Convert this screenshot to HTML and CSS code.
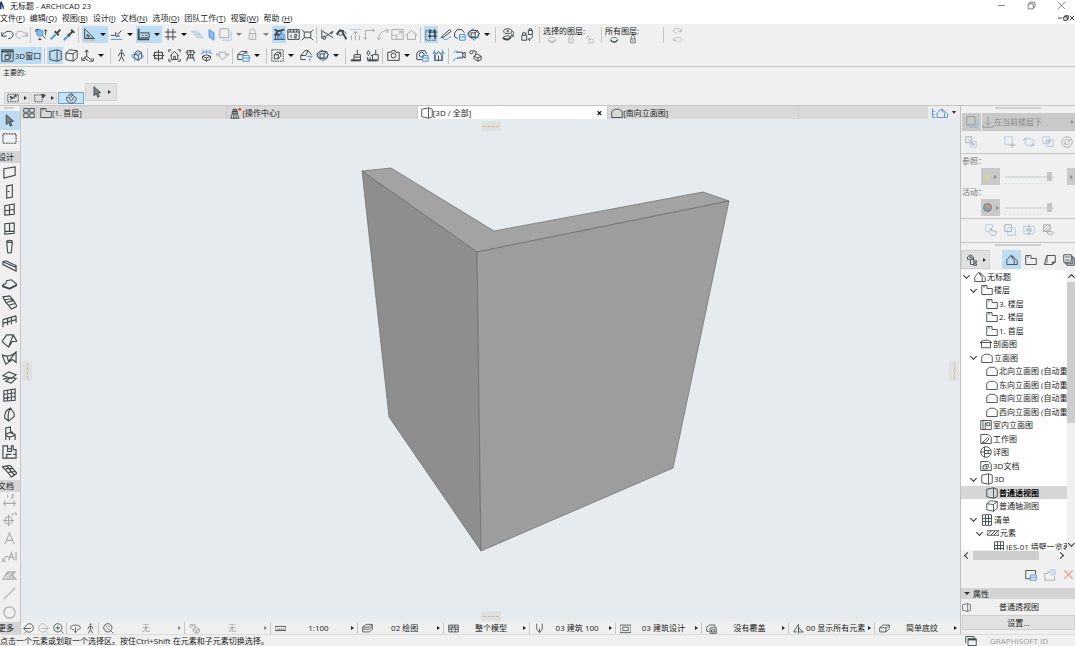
FILE: index.html
```html
<!DOCTYPE html>
<html lang="zh-CN">
<head>
  <meta charset="UTF-8">
  <meta name="viewport" content="width=device-width, initial-scale=1.0">
  <title>无标题 - ARCHICAD 23</title>
  <link rel="stylesheet" href="styles.css">
</head>
<body>
  <svg class="sprite" aria-hidden="true">
    <!-- editing -->
    <symbol id="undo" viewBox="0 0 16 16"><path d="M1 5v5h6M1 10c3-7 13-8 14-2 0 3-3 5-6 5"/></symbol>
    <symbol id="redo" viewBox="0 0 16 16"><path d="M15 5v5H9M15 10C12 3 2 2 1 8c0 3 3 5 6 5"/></symbol>
    <symbol id="find" viewBox="0 0 16 16"><circle cx="6" cy="6" r="4" class="blue-fill"/><path d="M9 9l4 4M1 2h4M1 2v3M13 2v7M11 4l2-2 2 2M6 12v3M4 14h4"/></symbol>
    <symbol id="pick" viewBox="0 0 16 16"><path class="blue thick" d="M2 14l6-6"/><path class="thick" d="M7 4l5 5M9 7l5-5"/></symbol>
    <symbol id="inject" viewBox="0 0 16 16"><path class="blue thick" d="M1 15l5-5"/><path class="thick" d="M6 10l6-6M10 2l4 4"/><path d="M5 7l4 4"/></symbol>
    <symbol id="setsquare" viewBox="0 0 16 16"><path d="M2 1v12h12zM5 8v2h3z"/><path d="M4 13v-2M7 13v-2M10 13v-2"/><path class="orange" d="M1 15h14"/></symbol>
    <symbol id="snapguide" viewBox="0 0 16 16"><path class="blue" d="M1 14h14"/><path d="M1 9h5M9 9l5-6M7 5v5h5"/></symbol>
    <symbol id="coords" viewBox="0 0 16 16"><path class="thick" d="M2 1v13h13"/><path d="M4 6h11v6H4M6 9h2M10 9h3"/></symbol>
    <symbol id="hash" viewBox="0 0 16 16"><path d="M5 1v14M11 1v14M1 5h14M1 11h14"/></symbol>
    <symbol id="plane" viewBox="0 0 16 16"><path class="blue" d="M1 4h7l7 8H8zM3 6h7M5 8h7M6 10h7"/></symbol>
    <symbol id="vplane" viewBox="0 0 16 16"><path class="blue-fill" d="M5 2l6 4v9l-6-4z"/></symbol>
    <symbol id="frame" viewBox="0 0 16 16"><path d="M1 1h11v11H1z"/><path class="blue" d="M4 15h11V4"/></symbol>
    <symbol id="lock" viewBox="0 0 16 16"><path d="M4 7h8v7H4zM5 7V4c0-4 6-4 6 0v3M8 9v3"/></symbol>
    <symbol id="gravity" viewBox="0 0 16 16"><path class="thick" d="M2 2l4 2 8-2M6 4L3 8h7"/><path d="M1 14h14M3 8v6M6 8v6M10 3v5"/><circle cx="11" cy="10" r="3" class="blue-fill"/></symbol>
    <symbol id="ruler" viewBox="0 0 16 16"><path d="M1 2h14v12H1zM1 5h14M4 2v3M8 2v3M12 2v3M5 8v4M9 8h3v2H9v2h3"/></symbol>
    <symbol id="stretch" viewBox="0 0 16 16"><path d="M4 5h8v7H4zM1 2l3 3M15 2l-3 3M1 15l3-3M15 15l-3-3"/></symbol>
    <symbol id="trim" viewBox="0 0 16 16"><path d="M1 2v11M2 4l13 8M3 12l12-8"/><circle cx="4" cy="12" r="2"/><circle cx="13" cy="6" r="1"/></symbol>
    <symbol id="hammer" viewBox="0 0 16 16"><path class="thick" d="M2 8l4-5 5 1M9 5l5 9"/><path d="M3 8l4 1 4-2M11 4l3 3"/></symbol>
    <symbol id="elevate" viewBox="0 0 16 16"><path class="blue" d="M1 2h14"/><path d="M8 15V4M5 7l3-3 3 3M3 9v6M13 9v6"/></symbol>
    <symbol id="place" viewBox="0 0 16 16"><path d="M8 1v11M4 8l4 4 4-4M1 15h14M1 12v3M15 12v3"/></symbol>
    <symbol id="corner" viewBox="0 0 16 16"><path d="M3 14V3h11M1 12l2 2 2-2M12 1l2 2-2 2"/></symbol>
    <symbol id="fillet" viewBox="0 0 16 16"><path d="M2 14C2 8 5 3 14 3M11 1l3 2-2 3M1 11l1 3 3-2"/></symbol>
    <symbol id="resize" viewBox="0 0 16 16"><path d="M1 2h14v12H1zM1 9h6v5M8 8l5-4M10 4h3v3"/></symbol>
    <symbol id="home" viewBox="0 0 16 16"><path d="M1 9l7-6 7 6M3 8v6h10V8"/></symbol>
    <symbol id="group" viewBox="0 0 16 16"><path class="dash" d="M1 3h12v12H1z"/><path d="M4 5h11M4 10h11M6 1v12M12 1v12"/><path class="solid" d="M5 4h2v2H5zM11 4h2v2h-2zM5 9h2v2H5zM11 9h2v2h-2z"/></symbol>
    <symbol id="pencil" viewBox="0 0 16 16"><path class="blue" d="M1 13c4-5 3 3 8 1 3-1 3-3 6-3"/><path d="M4 10l9-8 2 2-9 7-3 1z"/></symbol>
    <symbol id="cloudsave" viewBox="0 0 16 16"><path d="M6 13l-4-2V6l3-4h6l3 4"/><path class="blue" d="M8 8h7v7H8zM8 11h7"/></symbol>
    <symbol id="rotbox" viewBox="0 0 16 16"><path class="blue" d="M7 1l8 6-6 8-8-6z"/><path d="M1 6l4-3h8l2 4-2 5H4zM5 6h5v5H5zM10 6l3-3"/></symbol>
    <symbol id="eyes" viewBox="0 0 16 16"><ellipse cx="7" cy="4" rx="5" ry="3"/><circle cx="7" cy="4" r="1"/><path class="thick" d="M1 12c3 3 8 3 10-1"/><path d="M1 12c3-3 7-3 10-1M12 3c3 2 3 5 0 7M12 7v3h3"/></symbol>
    <symbol id="locks" viewBox="0 0 16 16"><path d="M1 9h6v6H1zM2 9V6h4v3M9 3h5v5H9zM10 3V1h3v2M14 9c1 3-2 5-5 5M11 12l-2 2 2 2"/></symbol>
    <symbol id="unlock" viewBox="0 0 16 16"><path d="M6 8h8v6H6zM2 7V4c0-3 5-3 5 0v4"/></symbol>
    <symbol id="eye" viewBox="0 0 16 16"><path d="M1 8c4-5 10-5 14 0-4 6-10 6-14 0"/><path class="thick" d="M2 9c4 5 8 5 12 0"/></symbol>
    <!-- 3D -->
    <symbol id="win3d" viewBox="0 0 16 16"><path d="M1 1h14v14H1zM5 8l2-2h5v5l-2 2H5zM5 8h5v5M10 8l2-2"/><path class="thick" d="M1 3h14"/></symbol>
    <symbol id="persp" viewBox="0 0 16 16"><path d="M1 3l9-2v14l-9-2zM10 1l5 2v10l-5 2"/></symbol>
    <symbol id="axon" viewBox="0 0 16 16"><path d="M1 5l9 1v9l-9-2zM1 5l5-4 9 1v9l-5 4M10 6l5-4"/></symbol>
    <symbol id="axes" viewBox="0 0 16 16"><path d="M7 2v7l-5 4M7 9l7 5M5 4l2-3 2 3M1 10v4h4M15 11v4h-5M5 9v3l4 2"/></symbol>
    <symbol id="walk" viewBox="0 0 16 16"><circle cx="8" cy="2" r="1"/><path d="M8 4v5l3 6M8 9l-3 6M4 9l2-4h4l2 4"/></symbol>
    <symbol id="orbit" viewBox="0 0 16 16"><path d="M4 6l4-4 5 2v6l-4 4-5-3zM4 6l5 2v6M9 8l4-4"/><path class="blue" d="M11 12c7-1 4-7-3-7S-2 10 5 12M3 10l3 2-2 3"/></symbol>
    <symbol id="target" viewBox="0 0 16 16"><path d="M8 1v14M1 8h14M3 4h10v8H3z"/><path d="M5 4c-3 3-3 5 0 8M11 4c3 3 3 5 0 8"/></symbol>
    <symbol id="houseframe" viewBox="0 0 16 16"><path d="M1 4V1h3M12 1h3v3M15 12v3h-3M4 15H1v-3M3 8l5-5 5 5M4 7v6h8V7M7 13V9h2v4"/></symbol>
    <symbol id="figure" viewBox="0 0 16 16"><path d="M4 2h8v5H4zM2 4h2M12 4h2M6 7l-3 8M10 7l3 8M8 7v4M4 11h8"/><circle cx="8" cy="4" r="1"/></symbol>
    <symbol id="lookdown" viewBox="0 0 16 16"><path class="blue" d="M4 5V1M8 4V1M12 5V1M1 6c4-3 10-3 14 0"/><path d="M3 9l5-2 5 2v3l-5 3-5-3zM3 9l5 2 5-2M8 11v4"/></symbol>
    <symbol id="level" viewBox="0 0 16 16"><path d="M1 7h3M12 7h3M4 4h8v6l-4 3-4-3zM1 5v4M15 5v4"/></symbol>
    <symbol id="cubesave" viewBox="0 0 16 16"><path d="M6 13H1V7l4-4h7v3M1 7h6l5-4"/><path class="blue" d="M7 8h8v7H7zM7 11h8"/></symbol>
    <symbol id="marqcube" viewBox="0 0 16 16"><path class="dash" d="M1 1h14v14H1z"/><path d="M4 7l3-3h5v5l-3 3H4zM4 7h5v5M9 7l3-3"/></symbol>
    <symbol id="filter" viewBox="0 0 16 16"><path d="M7 13H1V8l5-6h4l4 5M1 8h6l3-6"/><path class="blue" d="M8 9h7l-3 3v3"/></symbol>
    <symbol id="brush" viewBox="0 0 16 16"><path d="M9 1v6M5 7h8v3H5zM5 10l-1 4h9v-4"/><path class="thick" d="M1 14h12"/></symbol>
    <symbol id="brushes" viewBox="0 0 16 16"><path d="M12 1v6M8 7h7v7H8zM1 5l2-3 2 3-2 3zM6 8h2M2 10v4M5 10v4"/><path class="thick" d="M2 14h12"/></symbol>
    <symbol id="camera" viewBox="0 0 16 16"><path d="M1 4h4l1-2h4l1 2h4v10H1z"/><circle cx="8" cy="8" r="3"/></symbol>
    <symbol id="camsave" viewBox="0 0 16 16"><path d="M7 13H1V5l4-3h6l2 4"/><circle cx="7" cy="7" r="3"/><path class="blue" d="M8 8h7v7H8zM8 11h7"/></symbol>
    <symbol id="sunhouse" viewBox="0 0 16 16"><path class="blue" d="M3 1v14M13 1v14M1 6l2-3 2 3M11 6l2-3 2 3"/><path d="M4 8l4-5 4 5v6H4zM8 8v6"/></symbol>
    <symbol id="video" viewBox="0 0 16 16"><path d="M4 4h8v7H5M12 6l3-2v7l-3-2"/><path class="blue" d="M1 15c0-6 6-1 8-6M1 5c1-3 4-3 6-1"/></symbol>
    <symbol id="parts" viewBox="0 0 16 16"><circle cx="3" cy="4" r="2"/><path d="M5 2l4 1-1 4M6 9l4-3 5 3v4l-4 2-5-3zM6 9l5 2 4-2M11 11v4"/></symbol>
    <symbol id="selmarq" viewBox="0 0 16 16"><path class="dash" d="M1 3h14v10H1z"/><path class="thick" d="M4 6l3 2M10 5h3"/><path d="M4 11l7-6M5 8h6"/></symbol>
    <symbol id="marqarrow" viewBox="0 0 16 16"><path class="dash" d="M1 4h10v9H1z"/><path class="solid" d="M10 3l5 1-3 4z"/></symbol>
    <symbol id="magnet" viewBox="0 0 16 16"><path d="M2 7c-1 10 13 10 13 2 0-3-4-4-4-1 0 5-5 4-5 0M2 7h4M7 1l4 3-4 3M4 4h7"/></symbol>
    <symbol id="cursor" viewBox="0 0 16 16"><path class="shade" d="M4 1v12l3-3 2 5 2-1-2-5h4z"/></symbol>
    <!-- toolbox -->
    <symbol id="marquee" viewBox="0 0 16 16"><path class="dash" d="M1 3h14v10H1z"/></symbol>
    <symbol id="wall" viewBox="0 0 16 16"><path d="M2 4l12-2v9L2 14z"/></symbol>
    <symbol id="door" viewBox="0 0 16 16"><path d="M5 2l6-1v13l-6 1zM6 8h2"/></symbol>
    <symbol id="window" viewBox="0 0 16 16"><path d="M3 4l10-2v11l-10 1zM8 3v10M3 9l10-1"/></symbol>
    <symbol id="cornerwin" viewBox="0 0 16 16"><path d="M3 3l10-1v11l-10 1zM8 3v8M3 11h10"/></symbol>
    <symbol id="column" viewBox="0 0 16 16"><path d="M5 3c0-2 6-2 6 0l-1 11c0 1-4 1-4 0zM5 3c0 1 6 1 6 0"/></symbol>
    <symbol id="beam" viewBox="0 0 16 16"><path d="M1 4l14 6v4L1 7zM1 4l3-1 11 5v2"/></symbol>
    <symbol id="slab" viewBox="0 0 16 16"><path d="M0 9l4-2 1-3 5-1 6 5-8 4zM0 9v1l8 3 8-4V8"/></symbol>
    <symbol id="stair" viewBox="0 0 16 16"><path d="M1 2l7-1 3 3 2 3 3 5-6 3-3-4-3-3zM3 5l7-1M5 8l7-2M7 11l7-2M3 5l1 3M10 4l1 2"/></symbol>
    <symbol id="railing" viewBox="0 0 16 16"><path d="M1 6l14-4M1 6v8M6 5v7M10 4v7M15 2v7M1 10l14-4"/></symbol>
    <symbol id="roof" viewBox="0 0 16 16"><path d="M0 9l5-7h7l4 7h-5l-4 6zM12 2l-5 13"/></symbol>
    <symbol id="shell" viewBox="0 0 16 16"><path d="M0 4c4 2 10 2 15-3v11l-4-3-7 5zM5 5l2 6M15 1l-8 10"/></symbol>
    <symbol id="skylight" viewBox="0 0 16 16"><path d="M1 6l6-4 8 3-5 4zM1 10l6-2M4 12l5-4 6 1-5 5z"/></symbol>
    <symbol id="curtain" viewBox="0 0 16 16"><path d="M2 3l12-2v12L2 14zM6 2v12M10 2v12M2 7l12-2M2 11l12-2"/></symbol>
    <symbol id="morph" viewBox="0 0 16 16"><path d="M3 12c-1-6 2-9 6-11l4 6v3l-6 5zM9 1C6 6 6 10 7 15"/></symbol>
    <symbol id="chair" viewBox="0 0 16 16"><path d="M4 9V2l5-1v5M4 9l4-2 6 2v6M4 9v6M8 11v4M4 10l4 2 6-2M9 6l3 1"/></symbol>
    <symbol id="zone" viewBox="0 0 16 16"><path d="M1 2h5v3h4V2h2v4h3v9H1zM5 15v-4h5M6 5v3h4V5M12 11h3"/></symbol>
    <symbol id="mesh" viewBox="0 0 16 16"><path d="M0 4c4 0 5-2 9-1l7 8-6 4c-3-3-5-8-10-11zM5 3l8 10M4 6l8 0M7 10l7-1"/></symbol>
    <symbol id="dim" viewBox="0 0 16 16"><path d="M1 11h14M3 8v6M13 8v6M6 2v3M8 4h0M10 2h2v1l-2 2h2"/></symbol>
    <symbol id="leveldim" viewBox="0 0 16 16"><circle cx="7" cy="9" r="4"/><path d="M7 3v12M1 9h12M11 1v3M13 1h2v3"/></symbol>
    <symbol id="texta" viewBox="0 0 16 16"><path d="M3 14L8 2l5 12M5 10h6"/></symbol>
    <symbol id="labela" viewBox="0 0 16 16"><path d="M1 13l3-5h3M0 9v4h4M7 12l3-8 3 8M8 9h4M14 5l1-1v8"/></symbol>
    <symbol id="hatch" viewBox="0 0 16 16"><path d="M1 12l5-8h8l-3 4 4 4zM4 12l7-8M7 12l6-8M10 12l2-3M3 9l5-5"/></symbol>
    <symbol id="line" viewBox="0 0 16 16"><path d="M2 14L14 2"/></symbol>
    <symbol id="circle" viewBox="0 0 16 16"><circle cx="8" cy="8" r="6"/></symbol>
    <!-- navigator -->
    <symbol id="tiles" viewBox="0 0 16 16"><path d="M1 2h6v5H1zM9 2h6v5H9zM1 9h6v5H1zM9 9h6v5H9z"/></symbol>
    <symbol id="plan" viewBox="0 0 16 16"><path d="M1 2h7v4h7v8H1zM4 2v3"/></symbol>
    <symbol id="tower" viewBox="0 0 16 16"><path class="shade" d="M4 3h5v3H4z"/><path d="M3 6h7v3l2 6H1l2-6zM5 6v9M8 6v9M3 9h7"/><circle cx="13" cy="3" r="2" class="red-fill"/></symbol>
    <symbol id="elev" viewBox="0 0 16 16"><path d="M1 6l4-3h6l4 3v8H1z"/></symbol>
    <symbol id="section" viewBox="0 0 16 16"><path d="M0 6l5-3h6l5 3zM2 6v7h12V6"/></symbol>
    <symbol id="project" viewBox="0 0 16 16"><path d="M1 14V8l5-6 5 6v6zM6 2l3 1 6 6v5h-4M9 3v3"/></symbol>
    <symbol id="interior" viewBox="0 0 16 16"><path d="M1 2h14v12H1zM4 2v12M7 4v10M9 5h4v4H9z"/></symbol>
    <symbol id="sheet" viewBox="0 0 16 16"><path d="M1 2h10l4 4v8H1zM3 13l7-7 2 2-5 5z"/></symbol>
    <symbol id="detail" viewBox="0 0 16 16"><circle cx="8" cy="8" r="7"/><path d="M6 1v14M6 6h8M6 10h8M1 8h5M11 6v4"/></symbol>
    <symbol id="doc3d" viewBox="0 0 16 16"><path d="M1 2h10l4 4v8H1zM4 8l2-2h5v4l-2 2H4zM4 8h5v4"/></symbol>
    <symbol id="table" viewBox="0 0 16 16"><path d="M2 1h12v14H2zM2 6h12M2 10h12M6 1v14M10 1v14"/></symbol>
    <symbol id="elements" viewBox="0 0 16 16"><path d="M0 5h16v6H0zM1 10l5-5M5 11l6-6M9 11l6-6"/></symbol>
    <symbol id="layout" viewBox="0 0 16 16"><path d="M4 2L1 11v3h10M4 2v9l-3 3M4 2h11v9h-4v3M11 11h4l-4 3"/></symbol>
    <symbol id="publish" viewBox="0 0 16 16"><path d="M1 1h10v10H1zM3 11v2h10V3h-2M5 13v2h10V5h-2M3 4h6M3 8h6"/></symbol>
    <symbol id="mapicon" viewBox="0 0 16 16"><path d="M2 7V4l4-3 4 3v3H2M6 7v7h4M10 9h4v2h-4zM10 13h4v2h-4zM6 4l5 4M4 4h4"/></symbol>
    <symbol id="bluehome" viewBox="0 0 24 16"><path class="blue" d="M2 2v12h4M2 6h3M2 10h3M8 14V8l5-5 5 5v6zM13 3h2l7 6v5h-4M15 3v3"/></symbol>
    <symbol id="swap" viewBox="0 0 16 16"><path d="M1 1h8v8H1z"/><path class="blue" d="M7 7h8v8H7z"/><path d="M4 4l8 8M9 12h3V9"/></symbol>
    <symbol id="moveref" viewBox="0 0 16 16"><path class="blue" d="M8 11H1V1h10v6"/><path d="M7 12h8M11 8v8"/></symbol>
    <symbol id="rotref" viewBox="0 0 16 16"><path class="blue" d="M6 2l9 4-4 8-9-4z"/><path d="M1 6l1-3 3 1M15 10l-1 3-3-1"/></symbol>
    <symbol id="copyref" viewBox="0 0 16 16"><path class="blue" d="M1 1h9v9H1zM6 5h9v9H6z"/><path d="M5 7h6M9 5l2 2-2 2"/></symbol>
    <symbol id="gearref" viewBox="0 0 16 16"><circle cx="8" cy="8" r="7"/><path d="M4 7c1-3 6-3 7 0M5 9c1 3 6 3 7 0M11 4v3H9M5 12V9h2"/></symbol>
    <symbol id="handref" viewBox="0 0 16 16"><path class="blue" d="M5 10H1V1h9v4"/><path d="M7 10V6h2v3l6 1v3l-2 2H9l-4-4"/></symbol>
    <symbol id="overlap" viewBox="0 0 16 16"><path d="M1 1h9v9H1z"/><path class="blue" d="M5 5h10v10H5z"/></symbol>
    <symbol id="split" viewBox="0 0 16 16"><path class="blue" d="M1 3h14v10H1z"/><path d="M8 1v14M4 6l3 2-3 2M12 6l-3 2 3 2"/></symbol>
    <symbol id="eyebox" viewBox="0 0 16 16"><path d="M2 1h9v9H2zM2 6l5-5M2 10l9-9M6 10l5-5"/><ellipse cx="11" cy="12" rx="4" ry="2"/></symbol>
    <symbol id="newview" viewBox="0 0 16 16"><path d="M7 13H1V2h13v5"/><path class="blue" d="M7 8h8v7H7zM7 11h8"/></symbol>
    <symbol id="newfolder" viewBox="0 0 16 16"><path d="M8 4H5v2H1v9h13V9"/><circle class="blue" cx="12" cy="4" r="4"/><path class="blue" d="M12 2v4M10 4h4"/></symbol>
    <symbol id="cross" viewBox="0 0 16 16"><path d="M2 2l12 12M14 2L2 14"/></symbol>
    <!-- view bar -->
    <symbol id="zoomback" viewBox="0 0 16 16"><path d="M4 11c3 4 11 3 11-4S6-1 4 5M11 8H1M4 5L1 8l3 3M5 12l-3 3"/></symbol>
    <symbol id="zoomfwd" viewBox="0 0 16 16"><path d="M12 11C9 15 1 14 1 7S10-1 12 5M5 8h10M12 5l3 3-3 3M11 12l3 3"/></symbol>
    <symbol id="zoomin" viewBox="0 0 16 16"><circle cx="7" cy="7" r="6"/><path d="M7 4v6M4 7h6M11 11l4 4"/></symbol>
    <symbol id="zoomfit" viewBox="0 0 16 16"><circle cx="7" cy="7" r="6"/><path d="M4 4l2 2M10 4L8 6M4 10l2-2M10 10L8 8M11 11l4 4"/></symbol>
    <symbol id="orbitsm" viewBox="0 0 16 16"><path d="M6 10C-2 9 0 3 8 3s10 6 2 7M8 6v8M6 12l2 2 2-2"/></symbol>
    <symbol id="layers" viewBox="0 0 16 16"><path d="M1 6l5-4h9l-4 4zM1 6v3h10l4-4V2M1 9v4h10l4-4V5"/></symbol>
    <symbol id="solidbox" viewBox="0 0 16 16"><path d="M1 7l5-4h9l-4 4zM1 7v6h9l5-5V3M10 7v6"/></symbol>
    <symbol id="scale" viewBox="0 0 16 16"><path d="M0 5h16v6H0zM4 8v3M7 8v3M10 8v3M13 8v3"/></symbol>
    <symbol id="pattern" viewBox="0 0 16 16"><path d="M1 3h14v10H1zM1 6h14M1 9h14M5 3l2 3-3 3 2 4M11 3l-2 3 3 3-2 4"/></symbol>
    <symbol id="pen" viewBox="0 0 16 16"><path d="M4 1v8l4 5 4-5V1M8 8v6"/></symbol>
    <symbol id="viewopt" viewBox="0 0 16 16"><path d="M0 3h16v11H0zM4 6h8v5H4z"/></symbol>
    <symbol id="override" viewBox="0 0 16 16"><path d="M5 12H1V6l4-3h8v3M6 7h9v8H6zM8 10h5v3H8z"/></symbol>
    <symbol id="reno" viewBox="0 0 16 16"><path d="M6 13H1L8 2v5M8 7l7 6H8zM8 7v8"/></symbol>
    <symbol id="cascade" viewBox="0 0 16 16"><path d="M1 11V2h11v2M4 5h11v9H4z"/><path class="thick" d="M4 6h11"/></symbol>
    <symbol id="min" viewBox="0 0 16 16"><path d="M2 8h12"/></symbol>
    <symbol id="restore" viewBox="0 0 16 16"><path d="M2 5h9v9H2zM5 5V2h9v9h-3"/></symbol>
  </svg>

  <header>
    <div class="titlebar">
      <svg class="logo" viewBox="0 0 8 12" aria-hidden="true"><path d="M0 11V2l2-2 3 7v4H4L2 5v6z"/></svg>
      <h1>无标题 - ARCHICAD 23</h1>
      <div class="win-buttons">
        <button aria-label="最小化"><svg><use href="#min"/></svg></button>
        <button aria-label="还原"><svg><use href="#restore"/></svg></button>
        <button aria-label="关闭"><svg><use href="#cross"/></svg></button>
      </div>
    </div>
    <nav class="menu">
      <a href="#">文件(<u>F</u>)</a>
      <a href="#">编辑(<u>Q</u>)</a>
      <a href="#">视图(<u>B</u>)</a>
      <a href="#">设计(<u>I</u>)</a>
      <a href="#">文档(<u>N</u>)</a>
      <a href="#">选项(<u>O</u>)</a>
      <a href="#">团队工作(<u>T</u>)</a>
      <a href="#">视窗(<u>W</u>)</a>
      <a href="#">帮助 (<u>H</u>)</a>
      <div class="doc-buttons">
        <button aria-label="最小化文档"><svg><use href="#min"/></svg></button>
        <button aria-label="还原文档"><svg><use href="#restore"/></svg></button>
        <button aria-label="关闭文档"><svg><use href="#cross"/></svg></button>
      </div>
    </nav>
  </header>

  <div class="toolbar">
    <button aria-label="撤销"><svg><use href="#undo"/></svg></button>
    <button aria-label="重做" disabled><svg><use href="#redo"/></svg></button>
    <i class="sep"></i>
    <button aria-label="查找和选择"><svg><use href="#find"/></svg></button>
    <button aria-label="拾取参数"><svg><use href="#pick"/></svg></button>
    <button aria-label="注入参数"><svg><use href="#inject"/></svg></button>
    <i class="sep"></i>
    <button class="combo active" aria-label="辅助线"><svg><use href="#setsquare"/></svg></button>
    <button class="combo" aria-label="捕捉参考"><svg><use href="#snapguide"/></svg></button>
    <button class="combo active" aria-label="坐标"><svg><use href="#coords"/></svg></button>
    <button class="combo" aria-label="网格捕捉"><svg><use href="#hash"/></svg></button>
    <button aria-label="编辑平面" disabled><svg><use href="#plane"/></svg></button>
    <button aria-label="垂直平面"><svg><use href="#vplane"/></svg></button>
    <button class="combo" aria-label="描绘" disabled><svg><use href="#frame"/></svg></button>
    <button class="combo" aria-label="锁定" disabled><svg><use href="#lock"/></svg></button>
    <button class="active" aria-label="重力"><svg><use href="#gravity"/></svg></button>
    <button aria-label="测量"><svg><use href="#ruler"/></svg></button>
    <button aria-label="拉伸"><svg><use href="#stretch"/></svg></button>
    <i class="sep"></i>
    <button aria-label="修剪"><svg><use href="#trim"/></svg></button>
    <button aria-label="分割"><svg><use href="#hammer"/></svg></button>
    <button aria-label="调整" disabled><svg><use href="#elevate"/></svg></button>
    <button aria-label="相交" disabled><svg><use href="#corner"/></svg></button>
    <button aria-label="圆角" disabled><svg><use href="#fillet"/></svg></button>
    <button aria-label="缩放" disabled><svg><use href="#resize"/></svg></button>
    <button aria-label="屋顶" disabled><svg><use href="#home"/></svg></button>
    <i class="sep"></i>
    <button class="active" aria-label="暂停组"><svg><use href="#group"/></svg></button>
    <button aria-label="标记"><svg><use href="#pencil"/></svg></button>
    <button aria-label="保存云线"><svg><use href="#cloudsave"/></svg></button>
    <button class="combo" aria-label="旋转视图"><svg><use href="#rotbox"/></svg></button>
    <i class="sep"></i>
    <div class="layer-toggles">
      <button aria-label="切换图层显示"><svg><use href="#eyes"/></svg></button>
      <button aria-label="切换图层锁定"><svg><use href="#locks"/></svg></button>
    </div>
    <i class="sep"></i>
    <div class="layer-box">
      <span>选择的图层:</span>
      <div>
        <button aria-label="隐藏选择的图层" disabled><svg><use href="#eye"/></svg></button>
        <button aria-label="锁定选择的图层" disabled><svg><use href="#lock"/></svg></button>
        <button aria-label="解锁选择的图层" disabled><svg><use href="#unlock"/></svg></button>
      </div>
    </div>
    <i class="sep"></i>
    <div class="layer-box">
      <span>所有图层:</span>
      <div>
        <button aria-label="显示所有图层"><svg><use href="#eye"/></svg></button>
        <button aria-label="解锁所有图层"><svg><use href="#lock"/></svg></button>
      </div>
    </div>
    <i class="sep"></i>
    <div class="layer-history">
      <button aria-label="重做图层设置" disabled><svg><use href="#redo"/></svg></button>
      <button aria-label="撤销图层设置" disabled><svg><use href="#undo"/></svg></button>
    </div>
  </div>

  <div class="toolbar toolbar-3d">
    <button class="window-btn active"><svg><use href="#win3d"/></svg>3D窗口</button>
    <i class="sep"></i>
    <button class="active" aria-label="透视图"><svg><use href="#persp"/></svg></button>
    <button aria-label="轴测图"><svg><use href="#axon"/></svg></button>
    <button class="combo" aria-label="3D投影"><svg><use href="#axes"/></svg></button>
    <i class="sep"></i>
    <button aria-label="漫游"><svg><use href="#walk"/></svg></button>
    <button aria-label="动态观察"><svg><use href="#orbit"/></svg></button>
    <i class="sep"></i>
    <button aria-label="设置目标"><svg><use href="#target"/></svg></button>
    <button aria-label="适合窗口"><svg><use href="#houseframe"/></svg></button>
    <button aria-label="查看者"><svg><use href="#figure"/></svg></button>
    <button aria-label="垂直俯视"><svg><use href="#lookdown"/></svg></button>
    <button class="faint" aria-label="水平视图"><svg><use href="#level"/></svg></button>
    <i class="sep"></i>
    <button class="combo" aria-label="保存3D视图"><svg><use href="#cubesave"/></svg></button>
    <i class="sep"></i>
    <button class="combo" aria-label="选取框3D"><svg><use href="#marqcube"/></svg></button>
    <button aria-label="过滤元素"><svg><use href="#filter"/></svg></button>
    <button class="combo" aria-label="3D剖切"><svg><use href="#rotbox"/></svg></button>
    <i class="sep"></i>
    <button aria-label="表面画笔"><svg><use href="#brush"/></svg></button>
    <button aria-label="重置表面"><svg><use href="#brushes"/></svg></button>
    <i class="sep"></i>
    <button class="combo" aria-label="渲染"><svg><use href="#camera"/></svg></button>
    <button aria-label="保存渲染"><svg><use href="#camsave"/></svg></button>
    <button aria-label="日光研究"><svg><use href="#sunhouse"/></svg></button>
    <i class="sep"></i>
    <button aria-label="飞行动画"><svg><use href="#video"/></svg></button>
    <button aria-label="组件"><svg><use href="#parts"/></svg></button>
  </div>

  <div class="infobox">
    <span>主要的:</span>
    <div class="infobox-row">
      <button class="more" aria-label="选择方式"><svg><use href="#selmarq"/></svg></button>
      <button class="more" aria-label="选取框方式"><svg><use href="#marqarrow"/></svg></button>
      <button class="pressed" aria-label="快速选择"><svg><use href="#magnet"/></svg></button>
      <button class="more raised" aria-label="箭头"><svg><use href="#cursor"/></svg></button>
    </div>
  </div>

  <div class="workspace">
    <aside class="toolbox">
      <i class="grip"></i>
      <button class="active" aria-label="箭头工具"><svg><use href="#cursor"/></svg></button>
      <button aria-label="选取框"><svg><use href="#marquee"/></svg></button>
      <h2>设计</h2>
      <button aria-label="墙"><svg><use href="#wall"/></svg></button>
      <button aria-label="门"><svg><use href="#door"/></svg></button>
      <button aria-label="窗"><svg><use href="#window"/></svg></button>
      <button aria-label="角窗"><svg><use href="#cornerwin"/></svg></button>
      <button aria-label="柱"><svg><use href="#column"/></svg></button>
      <button aria-label="梁"><svg><use href="#beam"/></svg></button>
      <button aria-label="板"><svg><use href="#slab"/></svg></button>
      <button aria-label="楼梯"><svg><use href="#stair"/></svg></button>
      <button aria-label="栏杆"><svg><use href="#railing"/></svg></button>
      <button aria-label="屋顶"><svg><use href="#roof"/></svg></button>
      <button aria-label="壳体"><svg><use href="#shell"/></svg></button>
      <button aria-label="天窗"><svg><use href="#skylight"/></svg></button>
      <button aria-label="幕墙"><svg><use href="#curtain"/></svg></button>
      <button aria-label="变形体"><svg><use href="#morph"/></svg></button>
      <button aria-label="对象"><svg><use href="#chair"/></svg></button>
      <button aria-label="区域"><svg><use href="#zone"/></svg></button>
      <button aria-label="网面"><svg><use href="#mesh"/></svg></button>
      <h2>文档</h2>
      <button aria-label="尺寸标注" disabled><svg><use href="#dim"/></svg></button>
      <button aria-label="标高标注" disabled><svg><use href="#leveldim"/></svg></button>
      <button aria-label="文本" disabled><svg><use href="#texta"/></svg></button>
      <button aria-label="标签" disabled><svg><use href="#labela"/></svg></button>
      <button aria-label="填充" disabled><svg><use href="#hatch"/></svg></button>
      <button aria-label="线" disabled><svg><use href="#line"/></svg></button>
      <button aria-label="圆" disabled><svg><use href="#circle"/></svg></button>
      <h2>更多</h2>
    </aside>

    <main>
      <div class="tabs">
        <button class="overview" aria-label="标签概览"><svg><use href="#tiles"/></svg></button>
        <a class="tab" href="#"><svg><use href="#plan"/></svg>[1. 首层]</a>
        <a class="tab" href="#"><svg><use href="#tower"/></svg>[操作中心]</a>
        <a class="tab current" href="#"><svg><use href="#persp"/></svg>[3D / 全部]<b>×</b></a>
        <a class="tab" href="#"><svg><use href="#elev"/></svg>[南向立面图]</a>
        <div class="tab-space"></div>
        <button class="popup-nav" aria-label="弹出导航器"><svg><use href="#bluehome"/></svg></button>
      </div>

      <div class="view">
        <svg class="model" viewBox="0 0 939 503" role="img" aria-label="3D 墙体">
          <path class="face-top" d="M341 52l29-3 103 63 209-39 26 9-252 51z"/>
          <path class="face-left" d="M341 52l115 81 4 299-92-134z"/>
          <path class="face-right" d="M456 133l252-51-56 267-192 83z"/>
        </svg>
        <i class="handle top"></i>
        <i class="handle bottom"></i>
        <i class="handle left"></i>
        <i class="handle right"></i>
      </div>

      <div class="quickbar">
        <div class="zoom-tools">
          <button aria-label="上一缩放"><svg><use href="#zoomback"/></svg></button>
          <button aria-label="下一缩放" disabled><svg><use href="#zoomfwd"/></svg></button>
          <button aria-label="放大"><svg><use href="#zoomin"/></svg></button>
          <i class="sep"></i>
          <button aria-label="环绕"><svg><use href="#orbitsm"/></svg></button>
          <button aria-label="步行"><svg><use href="#walk"/></svg></button>
        </div>
        <button class="option off"><svg class="dark"><use href="#zoomfit"/></svg><span>无</span></button>
        <button class="option off"><svg><use href="#parts"/></svg><span>无</span></button>
        <button class="option"><svg><use href="#scale"/></svg><span>1:100</span></button>
        <button class="option"><svg><use href="#layers"/></svg><span>02 绘图</span></button>
        <button class="option"><svg><use href="#pattern"/></svg><span>整个模型</span></button>
        <button class="option"><svg><use href="#pen"/></svg><span>03 建筑 100</span></button>
        <button class="option"><svg><use href="#viewopt"/></svg><span>03 建筑设计</span></button>
        <button class="option"><svg><use href="#override"/></svg><span>没有覆盖</span></button>
        <button class="option"><svg><use href="#reno"/></svg><span>00 显示所有元素</span></button>
        <button class="option"><svg><use href="#solidbox"/></svg><span>简单底纹</span></button>
      </div>
    </main>

    <aside class="panel">
      <section class="trace">
        <i class="grip"></i>
        <div class="trace-target">
          <button aria-label="描绘参照" disabled><svg><use href="#frame"/></svg></button>
          <button class="more" disabled><svg><use href="#place"/></svg>在当前楼层下</button>
        </div>
        <div class="trace-icons">
          <button aria-label="切换参照" disabled><svg><use href="#swap"/></svg></button>
          <button class="push" aria-label="移动参照" disabled><svg><use href="#moveref"/></svg></button>
          <button aria-label="旋转参照" disabled><svg><use href="#rotref"/></svg></button>
          <button aria-label="重置参照" disabled><svg><use href="#copyref"/></svg></button>
          <button aria-label="刷新参照" disabled><svg><use href="#gearref"/></svg></button>
        </div>
        <label for="ref">参照：</label>
        <div class="trace-slider">
          <button class="more" aria-label="参照颜色" disabled><i class="swatch"></i></button>
          <input type="range" id="ref" value="96" disabled>
          <button class="more edge" aria-label="参照选项" disabled></button>
        </div>
        <label for="act">活动：</label>
        <div class="trace-slider">
          <button class="more" aria-label="活动颜色" disabled><i class="swatch wheel"></i></button>
          <input type="range" id="act" value="96" disabled>
        </div>
        <div class="trace-icons compare">
          <button aria-label="拖动" disabled><svg><use href="#handref"/></svg></button>
          <button aria-label="叠加" disabled><svg><use href="#overlap"/></svg></button>
          <button aria-label="分割比较" disabled><svg><use href="#split"/></svg></button>
          <button aria-label="显示参照" disabled><svg><use href="#eyebox"/></svg></button>
        </div>
      </section>

      <section class="navigator">
        <i class="grip"></i>
        <div class="nav-tabs">
          <button class="chooser more" aria-label="项目选择"><svg><use href="#mapicon"/></svg></button>
          <button class="active" aria-label="项目树状图"><svg><use href="#project"/></svg></button>
          <button aria-label="视图映射"><svg><use href="#plan"/></svg></button>
          <button aria-label="图册"><svg><use href="#layout"/></svg></button>
          <button aria-label="发布器"><svg><use href="#publish"/></svg></button>
        </div>
        <div class="tree-area">
          <ul class="tree">
            <li class="open"><svg><use href="#project"/></svg>无标题</li>
            <li class="open l1"><svg><use href="#plan"/></svg>楼层</li>
            <li class="l2"><svg><use href="#plan"/></svg>3. 楼层</li>
            <li class="l2"><svg><use href="#plan"/></svg>2. 楼层</li>
            <li class="l2"><svg><use href="#plan"/></svg>1. 首层</li>
            <li class="l1"><svg><use href="#section"/></svg>剖面图</li>
            <li class="open l1"><svg><use href="#elev"/></svg>立面图</li>
            <li class="l2"><svg><use href="#elev"/></svg>北向立面图 (自动重建</li>
            <li class="l2"><svg><use href="#elev"/></svg>东向立面图 (自动重建</li>
            <li class="l2"><svg><use href="#elev"/></svg>南向立面图 (自动重建</li>
            <li class="l2"><svg><use href="#elev"/></svg>西向立面图 (自动重建</li>
            <li class="l1"><svg><use href="#interior"/></svg>室内立面图</li>
            <li class="l1"><svg><use href="#sheet"/></svg>工作图</li>
            <li class="l1"><svg><use href="#detail"/></svg>详图</li>
            <li class="l1"><svg><use href="#doc3d"/></svg>3D文档</li>
            <li class="open l1"><svg><use href="#persp"/></svg>3D</li>
            <li class="l2 selected"><svg><use href="#persp"/></svg>普通透视图</li>
            <li class="l2"><svg><use href="#axon"/></svg>普通轴测图</li>
            <li class="open l1"><svg><use href="#table"/></svg>清单</li>
            <li class="open l2"><svg><use href="#elements"/></svg>元素</li>
            <li class="l3"><svg><use href="#table"/></svg>IES-01 墙壁一览表</li>
          </ul>
          <div class="scroll-y"><i></i></div>
        </div>
        <div class="scroll-x"><i></i></div>
        <div class="nav-actions">
          <button aria-label="新建视点"><svg><use href="#newview"/></svg></button>
          <button aria-label="新建文件夹" disabled><svg><use href="#newfolder"/></svg></button>
          <button class="delete" aria-label="删除"><svg><use href="#cross"/></svg></button>
        </div>
        <h2>属性</h2>
        <div class="prop"><svg><use href="#persp"/></svg><span>普通透视图</span></div>
        <button class="settings">设置...</button>
      </section>
    </aside>
  </div>

  <footer>
    <p>点击一个元素或划取一个选择区。按住Ctrl+Shift 在元素和子元素切换选择。</p>
    <div class="account"><svg><use href="#cascade"/></svg><a href="#">GRAPHISOFT ID</a></div>
  </footer>
</body>
</html>
```
FILE: styles.css
```css
* {
  box-sizing: border-box;
}

body {
  margin: 0;
  height: 100vh;
  display: flex;
  flex-direction: column;
  overflow: hidden;
  background: #f0f0f0;
  color: #222;
  font: 8px/12px "Open Sans", "Noto Sans CJK SC", sans-serif;
  white-space: nowrap;
}

button {
  display: flex;
  align-items: center;
  justify-content: center;
  margin: 0;
  padding: 0;
  border: 0;
  background: none;
  color: inherit;
  font: inherit;
}

a {
  color: inherit;
  text-decoration: none;
}

h1, h2, p, ul {
  margin: 0;
  padding: 0;
  font-size: 8px;
  font-weight: normal;
}

svg {
  width: 12px;
  height: 12px;
  flex: none;
  fill: none;
  stroke: #3f494d;
  stroke-width: 1.2;
}

.sprite {
  position: absolute;
  width: 0;
  height: 0;
}

.blue { stroke: #4b93e6; }
.blue-fill { stroke: #4b93e6; fill: #8fbdf0; }
.orange { stroke: #e8a35c; stroke-dasharray: 2 1; }
.red-fill { stroke: none; fill: #f5451f; }
.thick { stroke-width: 2.4; }
.dash { stroke-dasharray: 2 1; }
.solid { fill: #3f494d; }
.shade { fill: #7d8488; }

button:disabled svg, .faint svg {
  opacity: 0.4;
}

.active {
  background: #bcdcf4;
}

.sep {
  flex: none;
  width: 1px;
  height: 16px;
  margin: 0 3px 0 2px;
  background: #c6c6c6;
}

.grip {
  display: block;
  flex: none;
  width: 46px;
  height: 2px;
  margin: 1px auto 5px;
  background: #cfcfcf;
}

/* title and menu */
header {
  background: #fff;
}

.titlebar, .menu {
  display: flex;
  align-items: center;
  height: 12px;
}

.titlebar {
  height: 11px;
}

.menu {
  gap: 5px;
  height: 13px;
}

.logo {
  width: 6px;
  height: 9px;
  margin-right: 4px;
  fill: #1d3b78;
  stroke: none;
}

.win-buttons {
  display: flex;
  gap: 18px;
  margin-left: auto;
  padding-right: 8px;
}

.win-buttons svg {
  width: 9px;
  height: 9px;
}

.win-buttons button {
  width: 12px;
}

.doc-buttons {
  display: flex;
  margin-left: auto;
}

.doc-buttons svg {
  width: 6px;
  height: 6px;
  stroke: #000;
  stroke-width: 2;
}

/* toolbars */
.toolbar {
  display: flex;
  align-items: center;
  height: 21px;
}

.toolbar svg {
  width: 13px;
  height: 13px;
}

.toolbar > button {
  flex: none;
  width: 14px;
  height: 17px;
}

.toolbar > .combo {
  width: 26px;
  margin-right: 1px;
  justify-content: flex-start;
  padding-left: 1px;
}

.combo::after {
  content: "";
  margin-left: 4px;
  border: 3px solid transparent;
  border-top-color: #111;
  border-bottom: 0;
}

.combo:disabled::after {
  opacity: 0.5;
}

.toolbar-3d {
  height: 22px;
  border-bottom: 1px solid #c6c6c6;
}

.toolbar-3d > button {
  width: 16px;
}

.toolbar-3d > .combo {
  width: 28px;
  padding-left: 2px;
}

.toolbar-3d .sep {
  margin-right: 2px;
}

.toolbar-3d > .window-btn {
  width: 42px;
  gap: 1px;
}

.layer-toggles {
  display: flex;
  gap: 6px;
  padding: 0 3px;
}

.toolbar .layer-box {
  width: 56px;
  line-height: 9px;
}

.layer-box > div {
  display: flex;
  gap: 9px;
  padding-left: 4px;
}

.toolbar .layer-box svg {
  width: 10px;
  height: 9px;
}

.layer-history {
  padding-left: 6px;
}

.toolbar .layer-history svg {
  width: 9px;
  height: 9px;
}

/* info box */
.infobox {
  height: 39px;
  padding: 0 3px;
  border-bottom: 1px solid #c6c6c6;
}

.infobox > span {
  display: block;
  font-size: 7px;
}

.infobox-row {
  display: flex;
  align-items: flex-end;
  gap: 1px;
  height: 25px;
  padding-left: 1px;
}

.infobox-row button {
  width: 26px;
  height: 12px;
  background: #e3e3e3;
  border: 1px solid #d2d2d2;
}

.infobox-row .pressed {
  background: #c9e3f6;
  border-color: #6aa7d6;
}

.infobox-row .raised {
  width: 32px;
  height: 18px;
  align-self: center;
}

.more::after {
  content: "";
  margin-left: 5px;
  border: 2px solid transparent;
  border-left: 3px solid #333;
  border-right: 0;
}

/* workspace */
.workspace {
  display: flex;
  flex: 1;
  min-height: 0;
}

.toolbox {
  display: flex;
  flex-direction: column;
  width: 21px;
  border-right: 1px solid #c6c6c6;
}

.toolbox .grip {
  width: 10px;
  margin: 1px auto 2px 4px;
}

.toolbox button {
  flex: 1;
  min-height: 0;
  padding-right: 2px;
}

.toolbox svg {
  width: 15px;
  height: 15px;
}

.toolbox .active svg {
  width: 13px;
  height: 13px;
}

.toolbox h2 {
  height: 12px;
  text-indent: -2px;
  background: #d4d4d4;
}

.toolbox h2:first-of-type {
  margin-top: 3px;
}

main {
  display: flex;
  flex: 1;
  flex-direction: column;
  min-width: 0;
}

.tabs {
  display: flex;
  height: 13px;
  background: #d9d9d9;
}

.overview {
  width: 15px;
}

.tab {
  display: flex;
  flex: 190;
  align-items: center;
  padding-left: 3px;
  border-left: 1px solid #cbcbcb;
}

.tab b {
  margin-left: auto;
  padding-right: 5px;
  font-size: 10px;
  color: #000;
}

.tab.current {
  background: #fff;
}

.tab-space {
  flex: 132;
  border-left: 1px solid #cbcbcb;
}

.popup-nav {
  width: 32px;
  background: #ececec;
}

.popup-nav svg {
  width: 18px;
}

.popup-nav::after {
  content: "";
  margin-left: 3px;
  border: 2px solid transparent;
  border-top: 3px solid #333;
  border-bottom: 0;
}

.view {
  position: relative;
  flex: 1;
  min-height: 0;
  background: #e5ebee;
}

.model {
  display: block;
  width: 100%;
  height: 100%;
  stroke: #6c6c6c;
  stroke-width: 0.7;
  stroke-linejoin: round;
}

.face-top { fill: #a3a3a3; }
.face-left { fill: #8e8e8e; }
.face-right { fill: #9d9d9d; }

.handle {
  position: absolute;
  display: flex;
  align-items: center;
  justify-content: center;
  width: 20px;
  height: 10px;
  border-radius: 2px;
  background: #dce1e2;
}

.handle::after {
  content: "";
  width: 16px;
  border-top: 1px dashed #eab077;
}

.handle.top { top: 2px; left: calc(50% - 10px); }
.handle.bottom { bottom: 1px; left: calc(50% - 10px); }

.handle.left, .handle.right {
  top: calc(50% - 10px);
  width: 10px;
  height: 20px;
}

.handle.left::after, .handle.right::after {
  width: 0;
  height: 16px;
  border-top: 0;
  border-left: 1px dashed #eab077;
}

.handle.left { left: 1px; }
.handle.right { right: 1px; }

.quickbar {
  display: flex;
  height: 12px;
}

.zoom-tools {
  display: flex;
  align-items: center;
  width: 77px;
}

.zoom-tools button {
  width: 15px;
}

.quickbar svg {
  width: 11px;
  height: 11px;
}

.quickbar .sep {
  height: 12px;
  margin: 0 1px 0 0;
}

.option {
  flex: 1;
  min-width: 0;
  padding: 0 3px 0 4px;
  border-left: 1px solid #c6c6c6;
}

.option span {
  flex: 1;
  text-align: center;
}

.option::after {
  content: "";
  border: 2px solid transparent;
  border-left: 3px solid #222;
  border-right: 0;
}

.option.off {
  color: #999;
}

.option.off::after, .option.off svg:not(.dark) {
  opacity: 0.5;
}

/* right panel */
.panel {
  display: flex;
  flex-direction: column;
  width: 115px;
  border-left: 1px solid #c0c0c0;
  overflow: hidden;
}

.trace {
  height: 137px;
  border-bottom: 1px solid #c6c6c6;
  color: #777;
}

.trace .grip {
  margin-bottom: 4px;
}

.trace-target {
  display: flex;
  gap: 1px;
  height: 18px;
  padding-left: 1px;
}

.trace-target button {
  width: 19px;
  background: #c9c9c9;
}

.trace-target .more {
  flex: 1;
  justify-content: flex-start;
  color: #888;
}

.trace-target .more::after {
  margin: 0 1px 0 auto;
}

.more:disabled::after {
  opacity: 0.4;
}

.trace-icons {
  display: flex;
  align-items: center;
  height: 23px;
  gap: 7px;
  padding-left: 4px;
  border-bottom: 1px solid #c6c6c6;
}

.trace-icons .push {
  margin-left: 20px;
}

.trace-icons.compare {
  margin-top: 2px;
  padding-left: 24px;
  border-top: 1px solid #c6c6c6;
  border-bottom: 0;
}

.trace label {
  display: block;
  height: 14px;
  line-height: 14px;
  padding-left: 1px;
}

.trace-slider {
  display: flex;
  align-items: center;
  gap: 5px;
  height: 17px;
  padding-left: 20px;
}

.trace-slider button {
  width: 19px;
  height: 17px;
  background: #c9c9c9;
}

.trace-slider .edge {
  width: 8px;
  margin-left: auto;
}

.swatch {
  width: 6px;
  height: 6px;
  background: #d3d0b0;
}

.wheel {
  width: 9px;
  height: 9px;
  border: 1px solid #777;
  border-radius: 50%;
  background: conic-gradient(#d58f87 0 33%, #7c9cc9 33% 66%, #7fb58e 66%);
}

.trace-slider .more::after {
  margin-left: 4px;
}

.trace-slider .edge::after {
  margin: 0;
}

input[type="range"] {
  appearance: none;
  width: 49px;
  height: 15px;
  margin: 0;
  background: linear-gradient(#d9dede, #d9dede) center / 100% 2px no-repeat,
    repeating-linear-gradient(90deg, #d0d0d0 0 1px, transparent 1px 4px) bottom / 100% 1px no-repeat;
}

input[type="range"]::-webkit-slider-thumb {
  appearance: none;
  width: 5px;
  height: 9px;
  background: #c4c4c4;
}

.navigator {
  display: flex;
  flex: 1;
  flex-direction: column;
  min-height: 0;
}

.nav-tabs {
  display: flex;
  flex: none;
  height: 20px;
  margin-top: -1px;
}

.nav-tabs button {
  flex: none;
  width: 19px;
  height: 19px;
}

.nav-tabs .chooser {
  width: 29px;
  margin-right: 12px;
  background: #e0e0e0;
  border: 1px solid #d0d0d0;
}

.tree-area {
  display: flex;
  flex: 1;
  min-height: 0;
  background: #fff;
}

.tree {
  flex: 1;
  min-width: 0;
  overflow: hidden;
  list-style: none;
}

.tree li {
  display: flex;
  align-items: center;
  gap: 1px;
  height: 13px;
  padding-left: 12px;
}

.tree li:nth-child(even) {
  height: 14px;
}

.tree .l1 { padding-left: 19px; }
.tree .l2 { padding-left: 25px; }
.tree .l3 { padding-left: 32px; }

.tree .open::before {
  content: "";
  width: 4px;
  height: 4px;
  margin: 0 4px 2px -9px;
  border: solid #333;
  border-width: 0 1px 1px 0;
  transform: rotate(45deg);
}

.tree .selected {
  background: #d6d6d6;
  color: #000;
  font-weight: bold;
}

.scroll-y {
  display: flex;
  flex-direction: column;
  align-items: center;
  width: 8px;
  padding: 5px 0 4px;
  background: #f0f0f0;
}

.scroll-y i {
  width: 8px;
  height: 52%;
  margin: 2px 0 auto;
  background: #cdcdcd;
}

.scroll-y::before, .scroll-y::after, .scroll-x::before, .scroll-x::after {
  content: "";
  width: 4px;
  height: 4px;
  border: solid #333;
  border-width: 1px 0 0 1px;
  transform: rotate(45deg);
}

.scroll-y::after {
  transform: rotate(225deg);
}

.scroll-x {
  display: flex;
  align-items: center;
  flex: none;
  height: 11px;
  padding: 0 12px 0 4px;
}

.scroll-x::before {
  transform: rotate(-45deg);
}

.scroll-x::after {
  transform: rotate(135deg);
}

.scroll-x i {
  width: 66px;
  height: 9px;
  margin: 0 auto 0 3px;
  background: #cdcdcd;
}

.nav-actions {
  display: flex;
  flex: none;
  justify-content: flex-end;
  gap: 7px;
  height: 27px;
  padding-right: 1px;
}

.delete svg {
  width: 11px;
  height: 11px;
  stroke: #ee9a86;
  stroke-width: 2;
}

.navigator h2 {
  display: flex;
  flex: none;
  align-items: center;
  gap: 3px;
  height: 11px;
  padding-left: 3px;
  background: #d4d4d4;
}

.navigator h2::before {
  content: "";
  border: 3px solid transparent;
  border-top-color: #333;
  border-bottom: 0;
}

.prop {
  display: flex;
  flex: none;
  align-items: center;
  height: 16px;
}

.prop svg {
  width: 9px;
  height: 9px;
  margin-left: 1px;
}

.prop span {
  flex: 1;
  padding-right: 8px;
  text-align: center;
}

.settings {
  flex: none;
  height: 15px;
  margin: 0 0 4px 1px;
  background: #e1e1e1;
  border: 1px solid #cfcfcf;
}

/* status line */
footer {
  display: flex;
  height: 12px;
  border-top: 1px solid #dcdcdc;
}

footer p {
  flex: 1;
}

.account {
  display: flex;
  align-items: center;
  gap: 13px;
  width: 115px;
  padding-left: 5px;
  color: #999;
}
```
